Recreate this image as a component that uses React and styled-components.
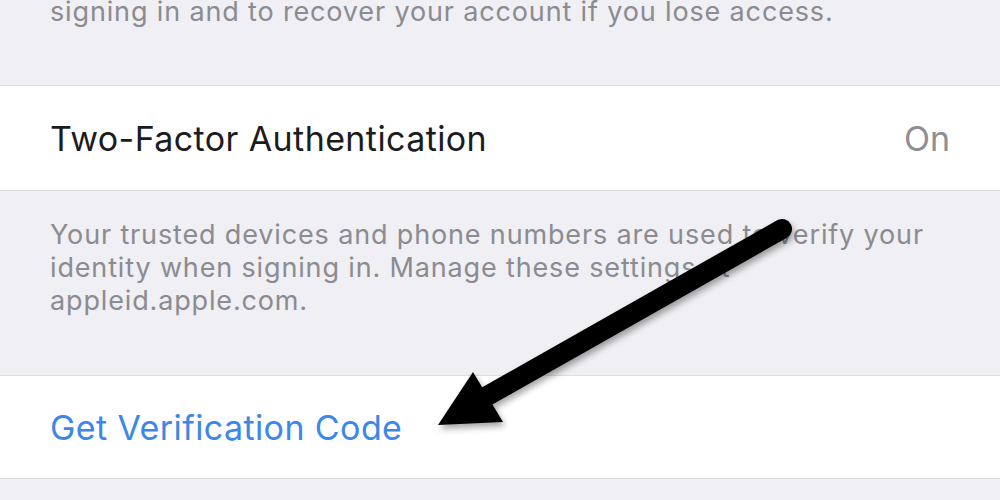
import React from "react";
import styled, { createGlobalStyle } from "styled-components";

const GlobalStyle = createGlobalStyle`
  html, body {
    margin: 0;
    padding: 0;
    background: #efeff4;
  }
  body {
    font-family: Inter, "Noto Sans", "Liberation Sans", sans-serif;
    -webkit-font-smoothing: antialiased;
  }
`;

const Screen = styled.div`
  position: relative;
  width: 1000px;
  height: 500px;
  overflow: hidden;
  background: #efeff4;
`;

const Footer = styled.div`
  height: ${(p) => p.height}px;
  box-sizing: border-box;
  padding: 0 50px;
  overflow: hidden;
`;

const FooterText = styled.p`
  margin: ${(p) => p.offset || 0}px 0 0;
  font-size: 27px;
  line-height: 33px;
  color: #8b8b90;
  letter-spacing: 0.85px;
  white-space: nowrap;
`;

const Cell = styled.div`
  display: flex;
  align-items: center;
  justify-content: space-between;
  height: ${(p) => p.height}px;
  box-sizing: border-box;
  padding: 0 50px;
  background: #ffffff;
  border-top: 1px solid #dedee2;
  border-bottom: 1px solid #dedee2;
`;

const Title = styled.span`
  font-size: 34px;
  color: ${(p) => (p.link ? "#3d87e6" : "#1c1c1e")};
  letter-spacing: 0.4px;
`;

const Detail = styled.span`
  font-size: 34px;
  color: #8e8e93;
`;

const Arrow = styled.svg`
  position: absolute;
  left: 0;
  top: 0;
  pointer-events: none;
  filter: drop-shadow(2px 4px 3px rgba(0, 0, 0, 0.35));
`;

export default function App() {
  return (
    <Screen>
      <GlobalStyle />
      <Footer height={85}>
        <FooterText offset={-5}>
          signing in and to recover your account if you lose access.
        </FooterText>
      </Footer>
      <Cell height={106}>
        <Title>Two-Factor Authentication</Title>
        <Detail>On</Detail>
      </Cell>
      <Footer height={184}>
        <FooterText offset={27}>
          Your trusted devices and phone numbers are used to verify your
          <br />
          identity when signing in. Manage these settings at
          <br />
          appleid.apple.com.
        </FooterText>
      </Footer>
      <Cell height={104}>
        <Title link>Get Verification Code</Title>
      </Cell>
      <Arrow width="1000" height="500" viewBox="0 0 1000 500">
        <line
          x1="782"
          y1="229"
          x2="480"
          y2="400"
          stroke="#000"
          strokeWidth="20"
          strokeLinecap="round"
        />
        <polygon points="438,425 473,372 503,422" fill="#000" />
      </Arrow>
    </Screen>
  );
}
